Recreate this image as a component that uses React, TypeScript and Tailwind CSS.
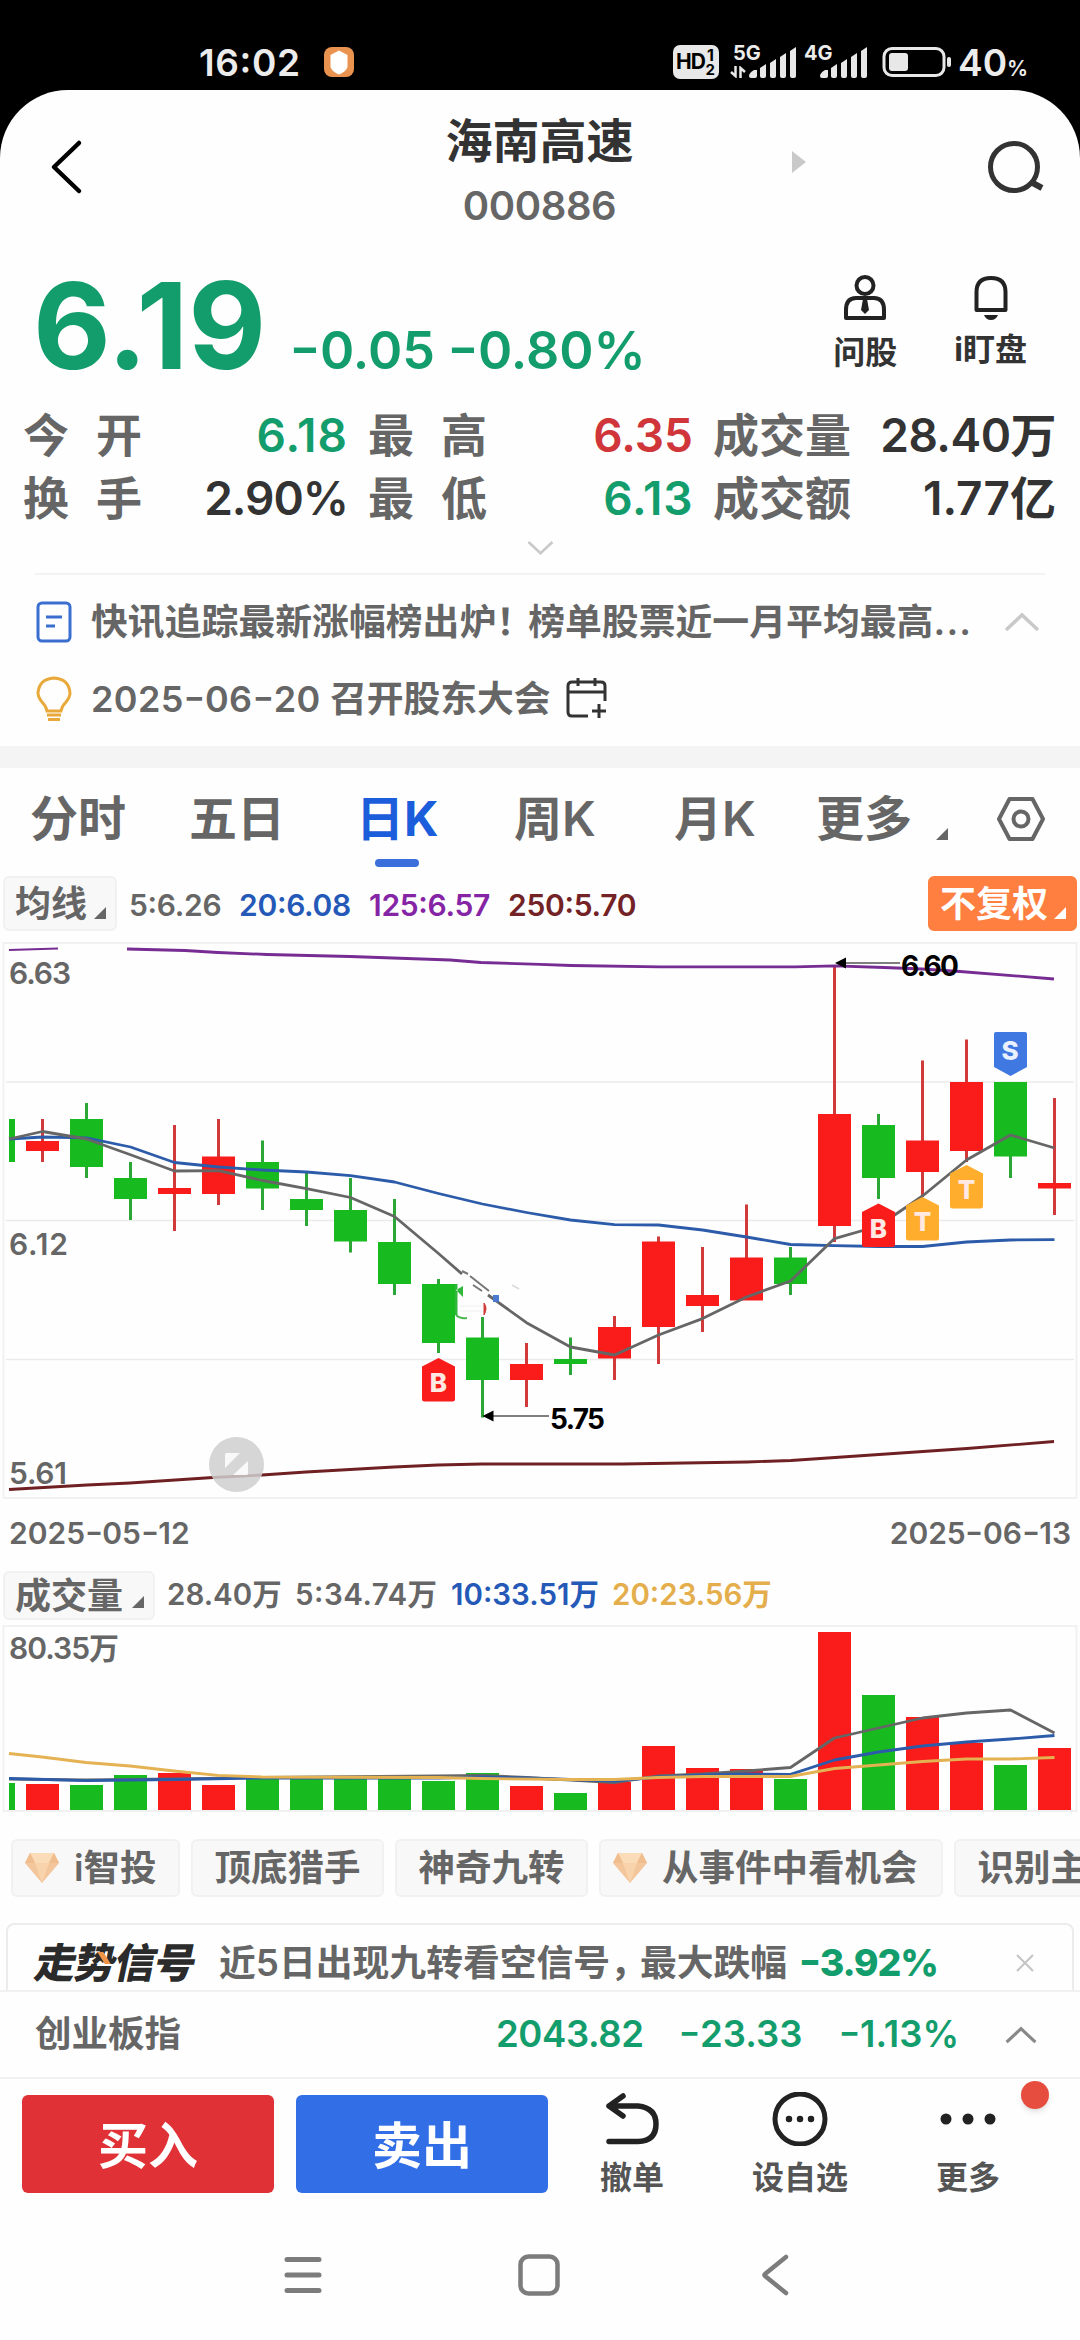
import type { ReactNode } from 'react';

type Point = [number, number];

const UP = '#fa1b1b';
const DOWN = '#17bb20';
const FIRST_X = 42.5;
const STEP = 44;

// [isUp, high, low, bodyTop, bodyBottom, volumeTop]
const candles: [boolean, number, number, number, number, number][] = [
  [true, 1119, 1162, 1141, 1151, 1784],
  [false, 1103, 1178, 1119, 1167, 1785],
  [false, 1162, 1220, 1178, 1199, 1775],
  [true, 1125, 1231, 1188, 1194, 1773],
  [true, 1119, 1205, 1156.5, 1194, 1785],
  [false, 1140.5, 1210, 1162, 1188.5, 1777],
  [false, 1172.5, 1226, 1199, 1210, 1779],
  [false, 1178, 1252.5, 1210, 1241.5, 1779],
  [false, 1199, 1295, 1242, 1284, 1775],
  [false, 1279, 1353, 1284, 1343, 1781],
  [false, 1317, 1417.5, 1337.5, 1380, 1773],
  [true, 1343, 1407, 1364, 1380, 1786],
  [false, 1337.5, 1375, 1359, 1364, 1793],
  [true, 1316, 1380, 1327, 1358.5, 1782],
  [true, 1236.5, 1364, 1241.5, 1327, 1746],
  [true, 1247, 1332, 1295, 1306, 1768],
  [true, 1204.5, 1300, 1257.5, 1300.5, 1769],
  [false, 1247, 1295, 1257.5, 1284, 1779],
  [true, 965, 1242, 1114, 1226, 1632],
  [false, 1114, 1199, 1125, 1178, 1695],
  [true, 1060.5, 1197, 1140.5, 1172, 1717],
  [true, 1039.5, 1162, 1082, 1151, 1743],
  [false, 1082, 1178, 1082, 1156.5, 1765],
  [true, 1098, 1215, 1183, 1188.5, 1748],
];

const centre = (i: number) => FIRST_X + STEP * i;

const join = (pts: Point[]) => pts.map((p) => p.join(',')).join(' ');

const series = (start: number, ys: number[]): Point[] => ys.map((y, i) => [centre(start + i), y]);

const ma5Left: Point[] = [
  [9, 1139],
  ...series(0, [1131.5, 1139, 1154.8, 1171, 1170.6, 1180.5, 1188.7, 1197.5, 1216.5, 1253.5]),
  [462, 1274],
];
const ma5Right: Point[] = [
  [488, 1295],
  ...series(11, [1322.7, 1347, 1355, 1335, 1318.6, 1297, 1281, 1238.6, 1226, 1196, 1160, 1135, 1148]),
];
const ma20: Point[] = [
  [9, 1139],
  ...series(
    0,
    [
      1137, 1137.8, 1147, 1162.5, 1167, 1170, 1172, 1175.7, 1182, 1193.5, 1204, 1212.5, 1220, 1224.7, 1225, 1230, 1237,
      1244.5, 1245.7, 1246.5, 1246.5, 1242, 1240, 1239.6,
    ],
  ),
];
const ma125: Point[] = [
  [127, 949], [185, 950.5], [218, 952.5], [267, 954.5], [350, 956.5], [450, 960], [481, 962.5], [540, 964.4],
  [571, 965.5], [660, 966.8], [795, 966.8], [835, 965.8], [884, 967.5], [922, 969], [960, 971.5], [1054, 979],
];
const ma250: Point[] = [
  [9, 1489.5], [87, 1485], [130, 1483], [213, 1477.5], [262, 1475], [306, 1472], [394, 1467], [438, 1465],
  [482, 1464], [622, 1464], [747, 1462], [791, 1460.5], [879, 1454.5], [967, 1448.5], [1054, 1441.5],
];

const vol5: Point[] = [
  [9, 1779], [86, 1780], [174, 1779], [262, 1777.5], [438, 1776],
  ...series(10, [1775.5, 1777.5, 1780, 1782.5, 1776, 1774, 1771, 1767.5, 1738, 1728, 1718, 1713, 1710, 1733]),
];
const vol10: Point[] = [
  [9, 1778.5], [86, 1780.7], [130, 1780], [174, 1779.5], [262, 1778], [438, 1778],
  ...series(10, [1777, 1778, 1779.5, 1781, 1777, 1775, 1774, 1774.3, 1760, 1752, 1746, 1742, 1739, 1735.5]),
];
const vol20: Point[] = [
  [9, 1753.5], [42, 1757], [86, 1762.5], [130, 1766], [174, 1771], [218, 1775.3], [262, 1777], [438, 1777.5],
  [482, 1778.5], [570, 1779.5], [614, 1779.5], [658, 1777.5], [703, 1776.5], [790, 1776.5],
  ...series(18, [1768.5, 1765, 1761.5, 1759, 1759, 1757.5]),
];

function Line({ points, color, width = 2.8 }: { points: Point[]; color: string; width?: number }) {
  return (
    <polyline points={join(points)} fill="none" stroke={color} strokeWidth={width} strokeLinejoin="round" />
  );
}

function Marker({ index, y, label, color }: { index: number; y: number; label: string; color: string }) {
  const x = centre(index);
  return (
    <g>
      <path
        d={`M${x} ${y}L${x + 16.5} ${y + 8.5}V${y + 41}Q${x + 16.5} ${y + 43.5} ${x + 14} ${y + 43.5}H${x - 14}Q${x - 16.5} ${y + 43.5} ${x - 16.5} ${y + 41}V${y + 8.5}Z`}
        fill={color}
      />
      <text x={x} y={y + 34} textAnchor="middle" fontSize="26" fontWeight="800" fill="#ffe9e2">
        {label}
      </text>
    </g>
  );
}

// Figures with a long minus / date dash
function Num({ children }: { children: string }) {
  return (
    <>
      {children.split(/(-)/).map((part, i) =>
        part === '-' ? (
          <span key={i} className="mx-[0.055em] inline-block scale-x-130">
            -
          </span>
        ) : (
          part
        ),
      )}
    </>
  );
}

function Corner({ className }: { className: string }) {
  return (
    <svg viewBox="0 0 12 12" className={className}>
      <path d="M12 0V12H0Z" fill="currentColor" />
    </svg>
  );
}

function Chevron({ className, up = false }: { className: string; up?: boolean }) {
  return (
    <svg viewBox="0 0 36 20" className={className} fill="none" stroke="currentColor" strokeWidth="3.5">
      <path d={up ? 'M2 18L18 3L34 18' : 'M2 2L18 17L34 2'} />
    </svg>
  );
}

function Diamond() {
  return (
    <svg viewBox="0 0 34 30" className="h-[30px] w-[34px] shrink-0">
      <path d="M5 0H29L34 10L17 30L0 10Z" fill="#f3c69b" />
      <path d="M5 0H29L24 10H10Z" fill="#fbdcb9" />
      <path d="M10 10H24L17 30Z" fill="#f9d3ab" />
      <path d="M0 10L5 0L10 10Z" fill="#efbd8e" />
      <path d="M34 10L29 0L24 10Z" fill="#efbd8e" />
    </svg>
  );
}

function SignalBars() {
  return (
    <svg viewBox="0 0 48 32" className="h-8 w-12" fill="#e8e8e8">
      <path d="M0 30Q0 27 5 24H8V30Q8 32 6 32H2Q0 32 0 30Z" />
      {[14, 19, 25, 31].map((h, i) => (
        <path key={h} d={`M${11 + i * 10} ${36 - h}L${17 + i * 10} ${32 - h}V30Q${17 + i * 10} 32 ${15 + i * 10} 32H${13 + i * 10}Q${11 + i * 10} 32 ${11 + i * 10} 30Z`} />
      ))}
    </svg>
  );
}

function StatusBar() {
  return (
    <header className="relative h-[90px] text-[#ececec]">
      <span className="absolute top-[40px] left-[199px] text-[37px] leading-[46px] font-semibold tracking-[0.6px]">16:02</span>
      <svg viewBox="0 0 30 30" className="absolute top-[47px] left-[324px] size-[30px]">
        <rect width="30" height="30" rx="8" fill="#ea9350" />
        <path d="M15 3.5L23.5 8V20Q22 25 15 27.5Q8 25 6.500 20V8Z" fill="#fff" />
      </svg>
      <div className="absolute top-[45px] left-[673px] h-[34px] w-[46px] rounded-[7px] bg-[#e8e8e8] text-black">
        <span className="absolute top-[5px] left-[3px] text-[21px] leading-6 font-bold tracking-[-1px]">HD</span>
        <span className="absolute top-[2px] right-[5px] text-[16px] leading-4 font-bold">1</span>
        <span className="absolute right-[4px] bottom-[1px] text-[15px] leading-4 font-bold">2</span>
      </div>
      <span className="absolute top-[41px] left-[733px] text-[20px] leading-6 font-bold">5G</span>
      <svg viewBox="0 0 16 12" className="absolute top-[66px] left-[730px] h-3 w-4" fill="none" stroke="#e8e8e8" strokeWidth="2.5">
        <path d="M1 6L5.500 10V0M10.500 12V2L15 6" />
      </svg>
      <div className="absolute top-[46px] left-[749px]">
        <SignalBars />
      </div>
      <span className="absolute top-[41px] left-[804px] text-[20px] leading-6 font-bold">4G</span>
      <div className="absolute top-[46px] left-[820px]">
        <SignalBars />
      </div>
      <svg viewBox="0 0 70 32" className="absolute top-[46px] left-[882px] h-8 w-[70px]">
        <rect x="2" y="2.500" width="60" height="27" rx="8" fill="none" stroke="#e8e8e8" strokeWidth="3" />
        <rect x="7" y="7" width="19" height="18" rx="3" fill="#e8e8e8" />
        <rect x="65" y="11" width="4" height="10" rx="2" fill="#e8e8e8" />
      </svg>
      <span className="absolute top-[40px] left-[958px] text-[37px] leading-[46px] font-semibold">
        40<span className="text-[21px]">%</span>
      </span>
    </header>
  );
}

function TitleBar() {
  return (
    <div className="flex h-[144px] items-start justify-between pr-[34px] pl-[49px]">
      <svg viewBox="0 0 34 56" className="mt-[49px] h-14 w-[34px]" fill="none" stroke="#000" strokeWidth="4.500" strokeLinecap="round" strokeLinejoin="round">
        <path d="M30 4L5 28L30 52" />
      </svg>
      <div className="relative ml-[10px] flex flex-col items-center">
        <h1 className="mt-[22px] text-[47px] leading-[58px] font-bold text-[#333]">海南高速</h1>
        <span className="mt-[11px] text-[40px] leading-[50px] font-semibold tracking-[-0.4px] text-[#666]">000886</span>
        <svg viewBox="0 0 14 22" className="absolute top-[61px] left-[346px] h-[22px] w-[14px]">
          <path d="M0 0L14 11L0 22Z" fill="#c9c9c9" />
        </svg>
      </div>
      <svg viewBox="0 0 60 54" className="mt-[50px] h-[54px] w-[60px]" fill="none" stroke="#333" strokeWidth="5">
        <circle cx="28" cy="27" r="23.500" />
        <path d="M45 42L56 48" strokeWidth="6" />
      </svg>
    </div>
  );
}

function Quote() {
  return (
    <div className="flex h-[168px] justify-between pr-[53px] pl-[33px] text-[#149d6c]">
      <div className="flex items-baseline">
        <span className="w-[257px] text-[120px] leading-[184px] font-bold">6.19</span>
        <span className="text-[52px] leading-[60px] font-semibold">
          <Num>-0.05 -0.80%</Num>
        </span>
      </div>
      <div className="flex gap-[57px] pt-[40px] text-[32px] leading-10 font-bold text-[#333]">
        <div className="flex flex-col items-center">
          <svg viewBox="0 0 44 48" className="h-12 w-11" fill="none" stroke="#222" strokeWidth="4">
            <circle cx="22" cy="11.500" r="8.500" />
            <path d="M3 44V36Q3 24 13 24H31Q41 24 41 36V44Z" strokeLinejoin="round" />
            <path d="M20 25H24L26 36L22 40L18 36Z" fill="#222" stroke="none" />
          </svg>
          <span className="mt-[11px]">问股</span>
        </div>
        <div className="flex flex-col items-center">
          <svg viewBox="0 0 38 48" className="h-12 w-[38px]" fill="none" stroke="#222" strokeWidth="4">
            <path d="M4.500 36V18Q4.500 4 19 4Q33.500 4 33.500 18V36Z" strokeLinejoin="round" />
            <path d="M12 41H26Q24 46 19 46Q14 46 12 41Z" fill="#222" stroke="none" />
          </svg>
          <span className="mt-[8px]">i盯盘</span>
        </div>
      </div>
    </div>
  );
}

const stats = [
  { label: ['今', '开'], value: '6.18', tone: 'tracking-[1px] text-[#149d6c]' },
  { label: ['最', '高'], value: '6.35', tone: 'text-[#cf3539]' },
  { label: ['成', '交', '量'], value: '28.40万', tone: 'tracking-[-0.5px] text-[#333]' },
  { label: ['换', '手'], value: '2.90%', tone: 'tracking-[-1px] text-[#333]' },
  { label: ['最', '低'], value: '6.13', tone: 'tracking-[0.6px] text-[#149d6c]' },
  { label: ['成', '交', '额'], value: '1.77亿', tone: 'text-[#333]' },
];

function Stats() {
  return (
    <div className="grid grid-cols-[325px_325px_343px] gap-x-[20px] pt-[2px] pl-[23px] text-[46px] leading-[63px] font-semibold">
      {stats.map((s, i) => (
        <div key={i} className="flex justify-between">
          <span className={s.label.length === 2 ? 'flex gap-[27px] text-[#666]' : 'flex text-[#666]'}>
            {s.label.map((c) => (
              <span key={c}>{c}</span>
            ))}
          </span>
          <span className={s.tone}>{s.value}</span>
        </div>
      ))}
    </div>
  );
}

function News() {
  return (
    <div className="h-[173px] border-t-2 border-[#f3f3f3] pt-[19px] text-[36.800px] font-semibold text-[#666]">
      <div className="flex h-[56px] items-center">
        <svg viewBox="0 0 38 42" className="h-[42px] w-[38px]" fill="none" stroke="#3a6fd0" strokeWidth="3">
          <rect x="3" y="2" width="32" height="38" rx="4" />
          <path d="M11 16H27M11 25H20" />
        </svg>
        <span className="ml-[18px] w-[884px] tracking-[0.050px] whitespace-nowrap">
          快讯追踪最新涨幅榜出炉<span className="tracking-[-5px]">！</span>榜单股票近一月平均最高
          <span className="tracking-[1.200px]">...</span>
        </span>
        <Chevron up className="ml-[29px] h-5 w-9 text-[#c9c9c9]" />
      </div>
      <div className="mt-[21px] flex h-[56px] items-center">
        <svg viewBox="0 0 38 46" className="h-[46px] w-[38px]" fill="none" stroke="#e9a93a" strokeWidth="3">
          <path d="M12 35Q11 30 7 26Q3 21 3 17Q4 3 19 2Q34 3 35 17Q35 21 31 26Q27 30 26 35Z" />
          <path d="M12 39H26M13 43.500H25" />
        </svg>
        <span className="ml-[18px] whitespace-nowrap">
          <span className="text-[36px] tracking-[0.4px]">
            <Num>2025-06-20</Num>
          </span>{' '}
          召开股东大会
        </span>
        <svg viewBox="0 0 42 44" className="ml-[15px] h-11 w-[42px]" fill="none" stroke="#333" strokeWidth="3">
          <path d="M22 39H6Q2 39 2 35V9Q2 5 6 5H35Q39 5 39 9V24M2 15H39M12 1V9M29 1V9M33 27V41M26 34H40" />
        </svg>
      </div>
    </div>
  );
}

function Tabs() {
  return (
    <nav className="flex h-[103px] pt-[20px] pl-[30px] text-[48px] leading-[62px] font-semibold text-[#666]">
      <span className="w-[159px]">分时</span>
      <span className="w-[167px]">五日</span>
      <span className="flex w-[158px] flex-col font-bold text-[#1c5ddb]">
        日K
        <span className="mt-[9px] ml-[19px] h-2 w-11 rounded bg-[#3b6fdb]" />
      </span>
      <span className="w-[160px]">周K</span>
      <span className="w-[142px]">月K</span>
      <span className="w-[120px]">更多</span>
      <Corner className="mt-[40px] size-[12px]" />
      <svg viewBox="0 0 50 46" className="mt-[8px] ml-[48px] h-[46px] w-[50px]" fill="none" stroke="#666" strokeWidth="4">
        <path d="M13.500 3H36.500L47 23L36.500 43H13.500L3 23Z" strokeLinejoin="round" />
        <circle cx="25" cy="23" r="7.500" />
      </svg>
    </nav>
  );
}

function Pill({ children, className }: { children: ReactNode; className: string }) {
  return (
    <div className={`relative flex items-center rounded-md border-2 pl-[10px] text-[36px] font-semibold ${className}`}>
      {children}
      <Corner className="absolute right-[9px] bottom-[10px] size-[12px]" />
    </div>
  );
}

function Averages() {
  return (
    <div className="flex h-[70px] items-start px-[3px] pt-[5px] text-[30px] leading-[58px] font-semibold">
      <Pill className="h-[55px] w-[114px] border-[#f1f1f1] bg-[#f8f8f8] text-[#666]">均线</Pill>
      <span className="ml-[12px] w-[110px] tracking-[-0.3px] text-[#666]">5:6.26</span>
      <span className="w-[130px] tracking-[-0.3px] text-[#2559b8]">20:6.08</span>
      <span className="w-[139px] tracking-[-0.3px] text-[#8524a5]">125:6.57</span>
      <span className="tracking-[-0.3px] text-[#732226]">250:5.70</span>
      <Pill className="ml-auto h-[55px] w-[149px] border-[#ff7f41] bg-[#ff7f41] text-white">不复权</Pill>
    </div>
  );
}

function PriceChart() {
  return (
    <svg viewBox="0 941 1080 559" className="block h-[559px] w-[1080px]">
      <rect x="3.500" y="943" width="1073" height="555" fill="none" stroke="#f1f1f1" strokeWidth="2" />
      {[1082, 1220.5, 1359.5].map((y) => (
        <line key={y} x1="6" x2="1074" y1={y} y2={y} stroke="#ebebeb" strokeWidth="1.500" />
      ))}
      <rect x="9" y="1119" width="6" height="43" fill={DOWN} />
      {candles.map(([up, high, low, top, bottom], i) => (
        <g key={i}>
          <rect x={centre(i) - 1.5} y={high} width="3" height={low - high} fill={up ? '#d03a3a' : '#2ca637'} />
          <rect x={centre(i) - 16.5} y={top} width="33" height={bottom - top} fill={up ? UP : DOWN} />
        </g>
      ))}
      <path d="M9 950L58 948.500" stroke="#762c92" strokeWidth="2" />
      <Line points={ma125} color="#762c92" />
      <Line points={ma250} color="#6f2022" />
      <Line points={ma20} color="#2b5ba9" />
      <Line points={ma5Left} color="#666" />
      <Line points={ma5Right} color="#666" />

      <path d="M462 1271L468 1274M470 1276L489 1291M473 1285L482 1291" stroke="#777" strokeWidth="2" />
      <path d="M455 1284V1315H457.500V1284ZM456 1290L463 1286V1297Z" fill="#2fb83a" />
      <path d="M456 1315Q460 1319 467 1318" stroke="#4cb553" strokeWidth="2" fill="none" />
      <path d="M484 1303Q488 1308 484 1315Z" fill="#d03a3a" stroke="#d03a3a" />
      <rect x="493" y="1295" width="6" height="7" fill="#4a79cf" />
      <path d="M460 1306H483M460 1311H483" stroke="#eee" />
      <path d="M512 1285L519 1289" stroke="#ddd" strokeWidth="2" />

      <Marker index={9} y={1358} label="B" color="#fa1b1b" />
      <Marker index={19} y={1203.5} label="B" color="#fa1b1b" />
      <Marker index={20} y={1197} label="T" color="#ffad2c" />
      <Marker index={21} y={1165} label="T" color="#ffad2c" />
      <path d="M996 1032H1025Q1027 1032 1027 1034V1067L1010.500 1076L994 1067V1034Q994 1032 996 1032Z" fill="#3f78e0" />
      <text x="1010" y="1060" textAnchor="middle" fontSize="26" fontWeight="800" fill="#e9f0ff">
        S
      </text>

      <circle cx="236.500" cy="1464.500" r="27.500" fill="#cfcfcf" fillOpacity="0.85" />
      <path d="M225 1454.500Q225 1453 226.500 1453H240L225 1468ZM248 1461V1473.500Q248 1475 246.500 1475H233Z" fill="#fff" fillOpacity="0.85" />

      <g fontSize="30" fontWeight="600" fill="#666">
        <text x="9" y="983.500" textLength="62">6.63</text>
        <text x="9" y="1254.500" textLength="59">6.12</text>
        <text x="9" y="1484" textLength="58">5.61</text>
      </g>
      <g stroke="#555" strokeWidth="1.500">
        <path d="M840 963H900M488 1416H549" />
      </g>
      <path d="M835 963L846 957.500V968.500ZM482.500 1416L493.500 1410.500V1421.500Z" fill="#000" />
      <g fontSize="28" fontWeight="700" fill="#000">
        <text x="901" y="976" textLength="58">6.60</text>
        <text x="550" y="1429" textLength="55">5.75</text>
      </g>
    </svg>
  );
}

function VolumeChart() {
  return (
    <svg viewBox="0 1624 1080 190" className="block h-[190px] w-[1080px]">
      <rect x="3.500" y="1626" width="1073" height="185" fill="none" stroke="#f1f1f1" strokeWidth="2" />
      <rect x="9" y="1783" width="6" height="27" fill={DOWN} />
      {candles.map((c, i) => (
        <rect key={i} x={centre(i) - 16.5} y={c[5]} width="33" height={1810 - c[5]} fill={c[0] ? UP : DOWN} />
      ))}
      <Line points={vol5} color="#666" />
      <Line points={vol10} color="#2b5ba9" />
      <Line points={vol20} color="#e4b252" />
      <text x="9" y="1659" fontSize="30" fontWeight="600" fill="#666" textLength="110">
        80.35万
      </text>
    </svg>
  );
}

function Chip({ children, className, gem = false }: { children: string; className: string; gem?: boolean }) {
  return (
    <div
      className={`flex h-[58px] shrink-0 items-center rounded-md border-2 border-[#f1f1f1] bg-[#f8f8f8] whitespace-nowrap ${className}`}
    >
      {gem && <Diamond />}
      <span className={gem ? 'ml-[15px]' : ''}>{children}</span>
    </div>
  );
}

function BottomItem({ label, icon, className }: { label: string; icon: ReactNode; className: string }) {
  return (
    <div className={`-mt-[3px] flex flex-col items-center text-[32px] leading-10 font-semibold text-[#555] ${className}`}>
      {icon}
      <span className="mt-[12px]">{label}</span>
    </div>
  );
}

export default function App() {
  return (
    <div className="h-[2340px] w-[1080px] overflow-hidden bg-black font-['Inter','Noto_Sans_CJK_SC',sans-serif] [font-feature-settings:'case']">
      <StatusBar />
      <main className="h-[2250px] overflow-hidden rounded-t-[68px] bg-[#fefefe]">
        <TitleBar />
        <Quote />
        <Stats />
        <div className="flex h-[43px] justify-center pt-[10px]">
          <Chevron className="h-4 w-[27px] text-[#c9c9c9]" />
        </div>
        <div className="px-[35px]">
          <News />
        </div>
        <div className="h-[22px] bg-[#f4f4f4]" />
        <Tabs />
        <Averages />
        <PriceChart />

        <div className="flex h-[71px] justify-between px-[9px] pt-[13px] text-[30px] leading-10 font-semibold text-[#666]">
          <span>
            <Num>2025-05-12</Num>
          </span>
          <span>
            <Num>2025-06-13</Num>
          </span>
        </div>
        <div className="flex h-[53px] items-start px-[3px] text-[29.500px] leading-[46px] font-semibold">
          <Pill className="h-[49px] w-[152px] border-[#f1f1f1] bg-[#f8f8f8] text-[#666]">成交量</Pill>
          <span className="ml-[12px] w-[128px] text-[#666]">28.40万</span>
          <span className="w-[156px] tracking-[0.500px] text-[#666]">5:34.74万</span>
          <span className="w-[161px] text-[#2559b8]">10:33.51万</span>
          <span className="text-[#e5ae4c]">20:23.56万</span>
        </div>
        <VolumeChart />

        <div className="mt-[25px] flex gap-[11px] overflow-hidden pl-[11px] text-[36.500px] font-semibold text-[#666]">
          <Chip gem className="w-[169px] pl-[12px]">i智投</Chip>
          <Chip className="w-[193px] justify-center">顶底猎手</Chip>
          <Chip className="w-[193px] justify-center">神奇九转</Chip>
          <Chip gem className="w-[344px] pl-[12px]">从事件中看机会</Chip>
          <Chip className="w-[193px] justify-center">识别主力</Chip>
        </div>

        <div className="mx-[6px] mt-[26px] flex h-[67px] items-center rounded-t-lg border-2 border-b-0 border-[#ececec] pt-[11px] pl-[28px] text-[36.800px] font-semibold text-[#666]">
          <span className="relative w-[183px] -skew-x-12 text-[41px] leading-[50px] font-black tracking-[-1.200px] text-[#2b2b2b]">
            走势信号
            <span className="absolute top-[14px] left-[64px] h-3 w-[6px] skew-x-40 bg-[#f0944a]" />
          </span>
          <span className="whitespace-nowrap">
            近5日出现九转看空信号<span className="tracking-[-7px]">，</span>最大跌幅
          </span>
          <span className="ml-[12px] text-[37.500px] font-extrabold tracking-[-1.200px] text-[#149d6c]">
            <Num>-3.92%</Num>
          </span>
          <svg viewBox="0 0 18 18" className="mr-[38px] ml-auto size-[18px]" stroke="#c4c4c4" strokeWidth="2">
            <path d="M1 1L17 17M17 1L1 17" />
          </svg>
        </div>

        <div className="flex h-[87px] items-center border-t-2 border-[#f1f1f1] pl-[35px] text-[36.500px] font-semibold text-[#666]">
          <span className="w-[461px]">创业板指</span>
          <span className="w-[183px] tracking-[-0.400px] text-[#149d6c]">2043.82</span>
          <span className="w-[160px] text-[#149d6c]">
            <Num>-23.33</Num>
          </span>
          <span className="w-[164px] text-[#149d6c]">
            <Num>-1.13%</Num>
          </span>
          <Chevron up className="h-[18px] w-[36px] text-[#888]" />
        </div>

        <div className="relative flex h-[156px] items-start border-t-2 border-[#f1f1f1] pt-[16px] pl-[22px]">
          <button className="h-[98px] w-[252px] rounded-md bg-[#e03136] pt-[4px] text-[50px] font-bold text-white">买入</button>
          <button className="ml-[22px] h-[98px] w-[252px] rounded-md bg-[#326fe6] pt-[4px] text-[50px] font-bold text-white">卖出</button>
          <BottomItem
            label="撤单"
            className="ml-[44px] w-20"
            icon={
              <svg viewBox="0 0 56 54" className="h-[54px] w-14" fill="none" stroke="#222" strokeWidth="5.500" strokeLinecap="round" strokeLinejoin="round">
                <path d="M19 4L5 14L19 24M5 14H34Q52 16 52 32Q52 49 34 49.500H5" />
              </svg>
            }
          />
          <BottomItem
            label="设自选"
            className="ml-[78px] w-[100px]"
            icon={
              <svg viewBox="0 0 56 54" className="h-[54px] w-14">
                <circle cx="28" cy="27" r="25" fill="none" stroke="#222" strokeWidth="5" />
                <path d="M17 27H17.010M28 27H28.010M39 27H39.010" stroke="#222" strokeWidth="6.500" strokeLinecap="round" />
              </svg>
            }
          />
          <BottomItem
            label="更多"
            className="ml-[78px] w-20"
            icon={
              <svg viewBox="0 0 56 54" className="h-[54px] w-14" fill="#222">
                <circle cx="6" cy="27" r="5.500" />
                <circle cx="28" cy="27" r="5.500" />
                <circle cx="50" cy="27" r="5.500" />
              </svg>
            }
          />
          <span className="absolute top-[2px] left-[1021px] size-[28px] rounded-full bg-[#e64d3f] shadow-md" />
        </div>

        <div className="flex h-[84px] items-center pl-[283px] text-[#7c7c7c]">
          <svg viewBox="0 0 40 44" className="h-11 w-10" stroke="currentColor" strokeWidth="5" strokeLinecap="round">
            <path d="M4 6.500H36M4 22H36M4 37.500H36" />
          </svg>
          <svg viewBox="0 0 44 44" className="ml-[194px] size-11" fill="none" stroke="currentColor" strokeWidth="4.500">
            <rect x="3.500" y="3.500" width="37" height="37" rx="8" />
          </svg>
          <svg viewBox="0 0 30 44" className="ml-[199px] h-11 w-[30px]" fill="none" stroke="currentColor" strokeWidth="4.500" strokeLinecap="round" strokeLinejoin="round">
            <path d="M26 4L5 21Q4 22 5 23L26 40" />
          </svg>
        </div>
      </main>
    </div>
  );
}
